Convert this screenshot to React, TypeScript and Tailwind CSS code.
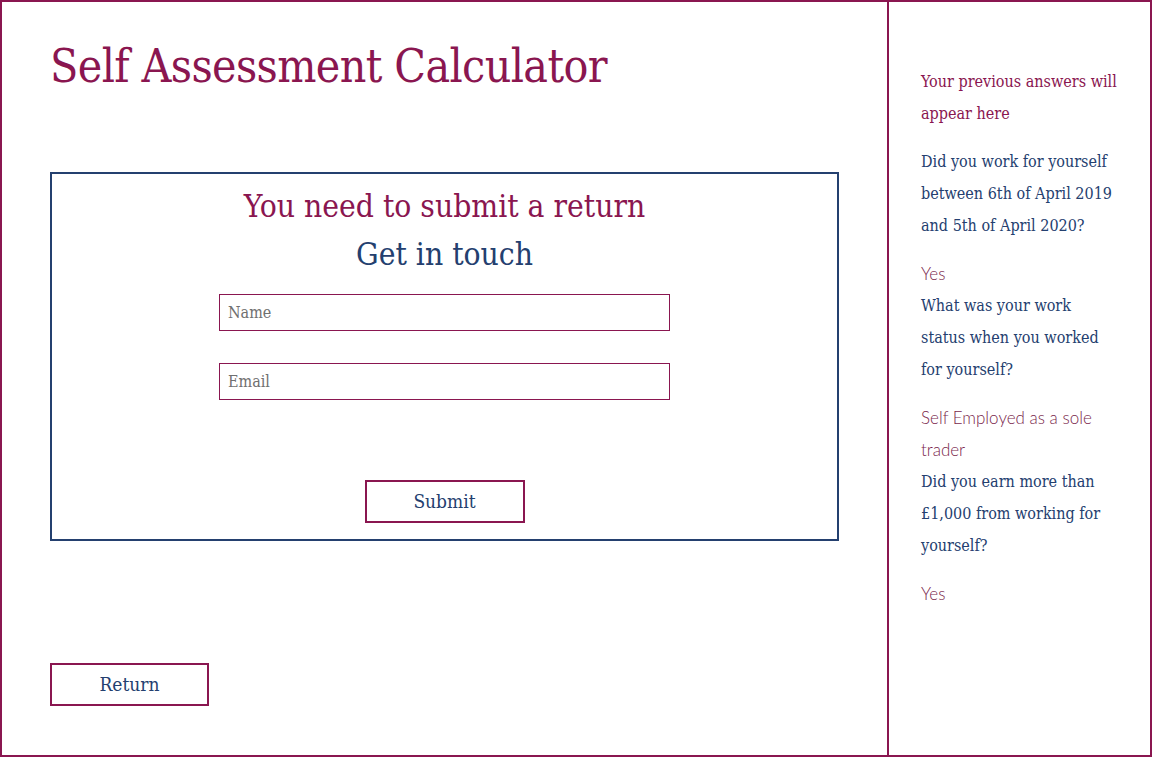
import React from 'react';

const slab = "font-['DejaVu_Serif_Condensed','DejaVu_Serif',serif]";
const light = "font-['Lato','Open_Sans',sans-serif] font-light";

const history = [
  {
    question: 'Did you work for yourself between 6th of April 2019 and 5th of April 2020?',
    answer: 'Yes',
  },
  {
    question: 'What was your work status when you worked for yourself?',
    answer: 'Self Employed as a sole trader',
  },
  {
    question: 'Did you earn more than £1,000 from working for yourself?',
    answer: 'Yes',
  },
];

export default function App() {
  return (
    <div className="flex h-[757px] w-[1152px] border-2 border-[#8a1650] bg-white">
      <main className="flex flex-1 flex-col px-[48px]">
        <h1 className={`${slab} mt-[36px] text-[46px] leading-[56px] tracking-[-0.6px] text-[#8a1650]`}>
          Self Assessment Calculator
        </h1>

        {/* Result card */}
        <section className="mt-[78px] flex flex-col items-center border-2 border-[#24406f] pb-[16px] pt-[8px]">
          <h2 className={`${slab} text-[31.5px] leading-[48px] text-[#8a1650]`}>You need to submit a return</h2>
          <h3 className={`${slab} text-[31.5px] leading-[48px] text-[#24406f]`}>Get in touch</h3>
          <form className="mt-[16px] flex w-[451px] flex-col gap-[32px]" onSubmit={(e) => e.preventDefault()}>
            <input
              type="text"
              placeholder="Name"
              className={`${slab} h-[37px] w-full border border-[#8a1650] px-[8px] text-[16px] text-[#444] outline-none placeholder:text-[#707070]`}
            />
            <input
              type="email"
              placeholder="Email"
              className={`${slab} h-[37px] w-full border border-[#8a1650] px-[8px] text-[16px] text-[#444] outline-none placeholder:text-[#707070]`}
            />
            <button
              type="submit"
              className={`${slab} mx-auto mt-[48px] h-[43px] w-[160px] border-2 border-[#8a1650] bg-white text-[19px] text-[#24406f]`}
            >
              Submit
            </button>
          </form>
        </section>

        <button
          className={`${slab} mt-[122px] h-[43px] w-[159px] border-2 border-[#8a1650] bg-white text-[19px] text-[#24406f]`}
        >
          Return
        </button>
      </main>

      {/* Previous answers */}
      <aside className="w-[263px] border-l-2 border-[#8a1650] pl-[32px] pr-[33px] pt-[64px]">
        <p className={`${slab} mb-[16px] text-[16px] leading-[32px] text-[#8a1650]`}>
          Your previous answers will appear here
        </p>
        {history.map((item, i) => (
          <div key={i}>
            <p className={`${slab} mb-[16px] text-[16px] leading-[32px] text-[#24406f]`}>{item.question}</p>
            <p className={`${light} text-[17px] leading-[32px] text-[#7a1f4c]`}>{item.answer}</p>
          </div>
        ))}
      </aside>
    </div>
  );
}
